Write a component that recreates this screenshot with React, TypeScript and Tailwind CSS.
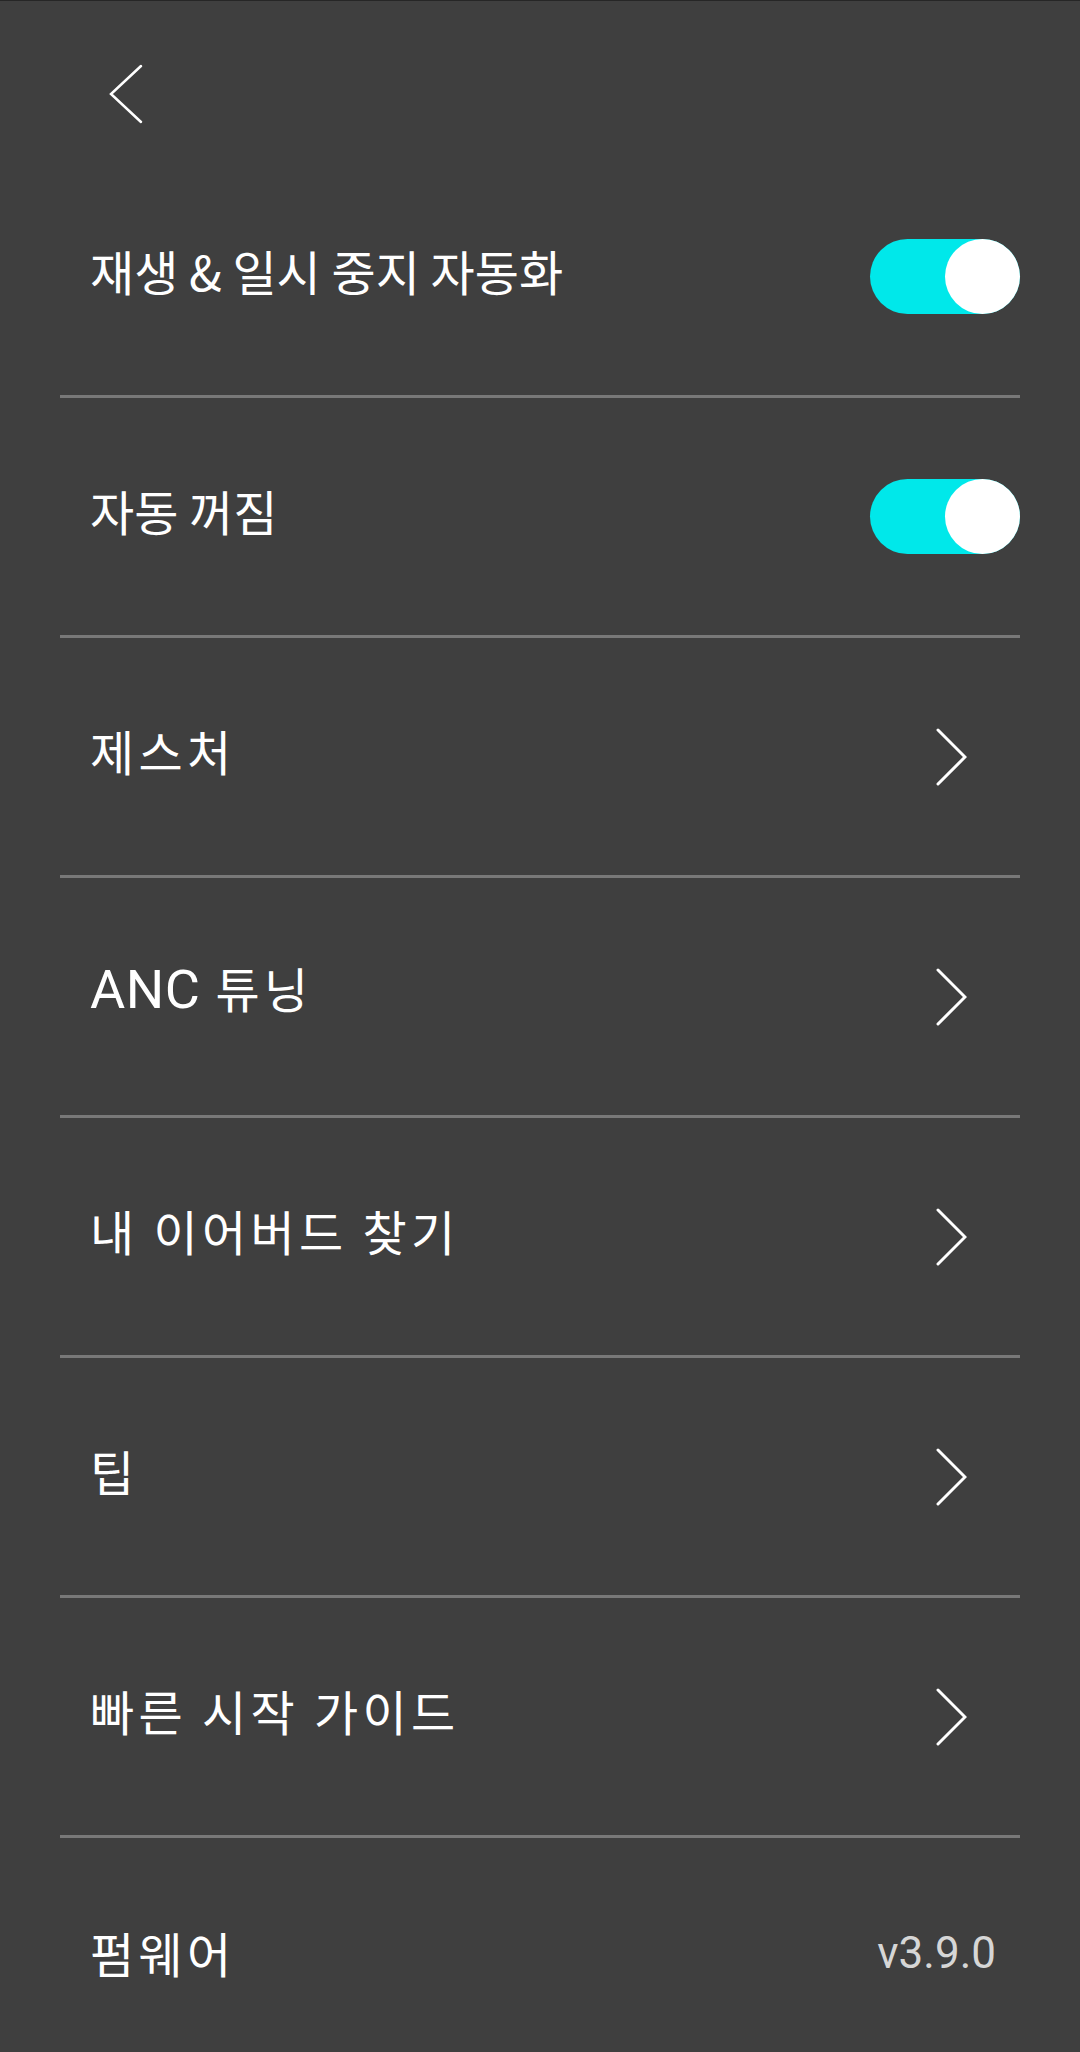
import React from "react";

const font = { fontFamily: '"Noto Sans CJK KR", "Noto Sans", sans-serif' };

function Toggle() {
  return (
    <div className="relative h-[75px] w-[150px] rounded-full bg-[#00e8ea]">
      <div className="absolute right-0 top-0 h-[75px] w-[75px] rounded-full bg-white" />
    </div>
  );
}

function ChevronRight() {
  return (
    <svg width="31" height="58" viewBox="0 0 31 58" fill="none">
      <polyline
        points="2,2 29,29 2,56"
        stroke="white"
        strokeWidth="3"
        strokeLinecap="round"
        strokeLinejoin="miter"
      />
    </svg>
  );
}

function Row({
  label,
  right,
  pr,
  wide,
  last,
}: {
  label: React.ReactNode;
  right: React.ReactNode;
  pr: string;
  wide?: boolean;
  last?: boolean;
}) {
  return (
    <div
      className={`flex h-[240px] items-center justify-between pl-[30px] ${pr} ${
        last ? "" : "border-b-[3px] border-[#787878]"
      }`}
    >
      <span
        className={`mb-[13px] whitespace-nowrap text-[48px] leading-none text-white ${
          wide ? "tracking-[0.09em]" : "tracking-normal"
        }`}
        style={font}
      >
        {label}
      </span>
      {right}
    </div>
  );
}

export default function App() {
  return (
    <div className="h-[2052px] w-[1080px] overflow-hidden border-t border-[#262626] bg-[#3f3f3f]">
      <div className="flex h-[157px] items-start pl-[109px] pt-[63px]">
        <svg width="34" height="60" viewBox="0 0 34 60" fill="none">
          <polyline
            points="32,2 2,30 32,58"
            stroke="white"
            strokeWidth="2.5"
            strokeLinecap="round"
          />
        </svg>
      </div>
      <div className="px-[60px]">
        <Row label="재생 & 일시 중지 자동화" right={<Toggle />} pr="pr-0" />
        <Row label="자동 꺼짐" right={<Toggle />} pr="pr-0" />
        <Row label="제스처" right={<ChevronRight />} pr="pr-[53px]" wide />
        <Row
          label={
            <>
              <span
                className="text-[54px] tracking-[0.01em]"
                style={{ fontFamily: "Roboto, sans-serif" }}
              >
                ANC
              </span>{" "}
              튜닝
            </>
          }
          right={<ChevronRight />}
          pr="pr-[53px]"
          wide
        />
        <Row label="내 이어버드 찾기" right={<ChevronRight />} pr="pr-[53px]" wide />
        <Row label="팁" right={<ChevronRight />} pr="pr-[53px]" wide />
        <Row label="빠른 시작 가이드" right={<ChevronRight />} pr="pr-[53px]" wide />
        <Row
          label="펌웨어"
          right={
            <span
              className="mb-[10px] text-[44px] leading-none text-[#d6d6d6]"
              style={{ fontFamily: "Roboto, sans-serif" }}
            >
              v3.9.0
            </span>
          }
          pr="pr-[24px]"
          wide
          last
        />
      </div>
    </div>
  );
}
